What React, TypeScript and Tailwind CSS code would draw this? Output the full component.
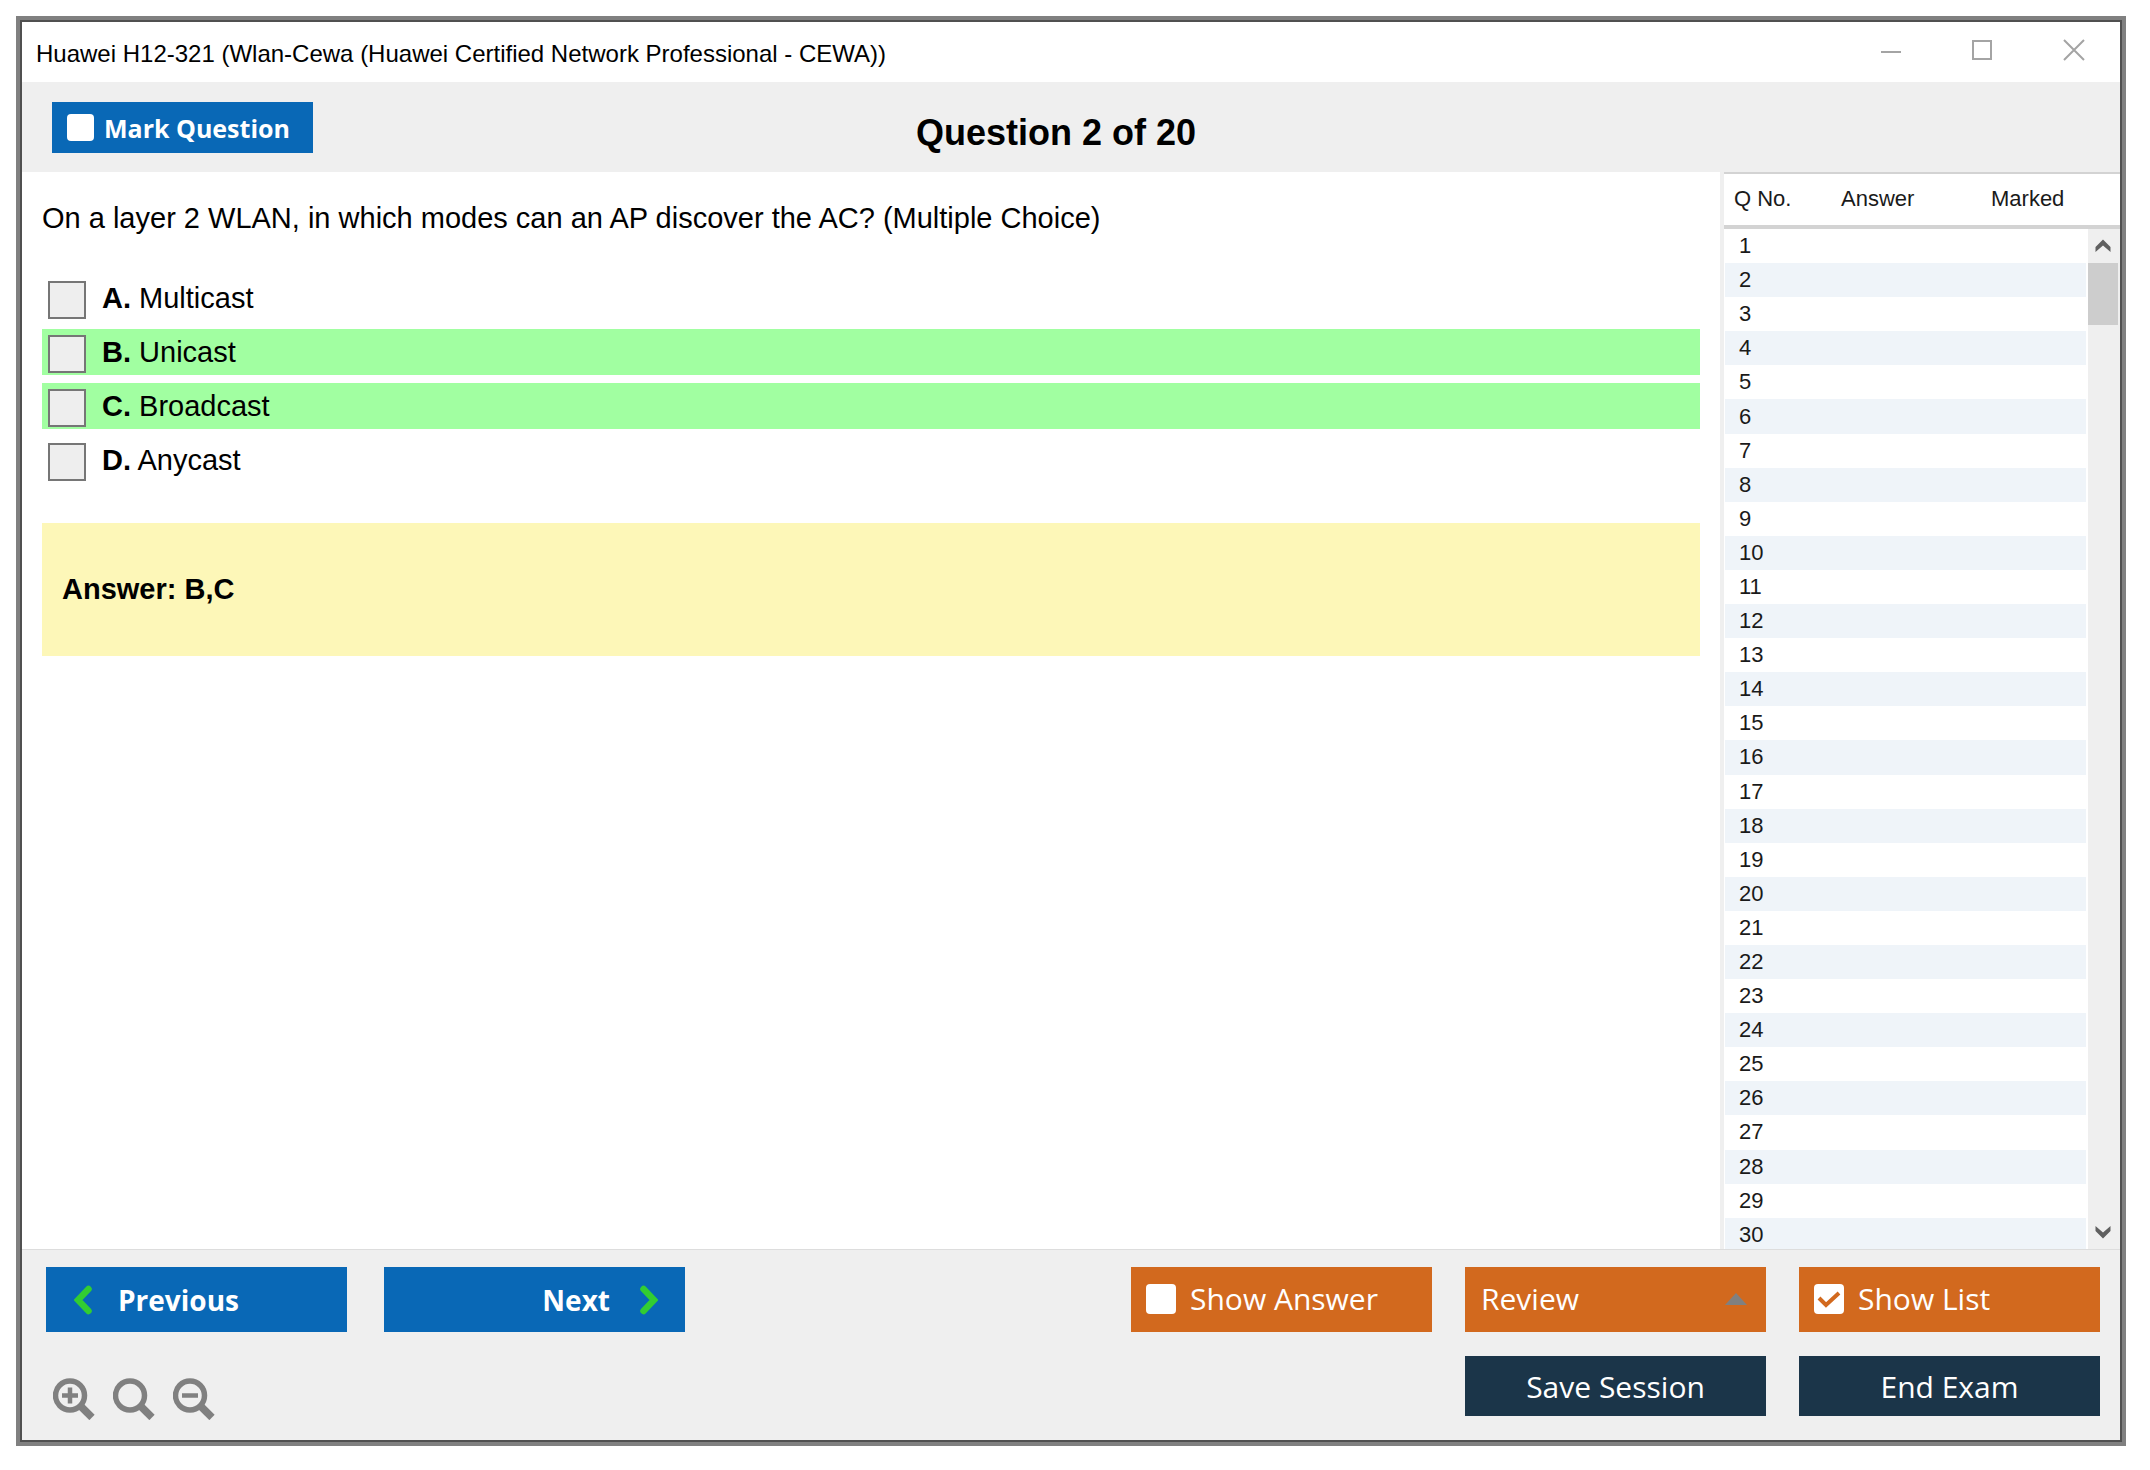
import React from 'react';

const options = [
  { letter: 'A', text: 'Multicast', correct: false },
  { letter: 'B', text: 'Unicast', correct: true },
  { letter: 'C', text: 'Broadcast', correct: true },
  { letter: 'D', text: 'Anycast', correct: false },
];

const questionNumbers = Array.from({ length: 30 }, (_, i) => i + 1);

const TitleBar: React.FC = () => {
  return (
    <header className="flex h-15 items-center justify-between pl-3.5 pr-[35px]">
      <h1 className="pt-1 text-[24px] leading-8">
        Huawei H12-321 (Wlan-Cewa (Huawei Certified Network Professional - CEWA))
      </h1>
      <div className="flex items-center gap-[70px] pb-1 text-[#a4a4a4]">
        <button type="button" aria-label="Minimize">
          <svg viewBox="0 0 22 22" className="size-[22px]" stroke="currentColor" strokeWidth="2" fill="none">
            <path d="M2 13h20" />
          </svg>
        </button>
        <button type="button" aria-label="Maximize">
          <svg viewBox="0 0 22 22" className="size-[22px]" stroke="currentColor" strokeWidth="2" fill="none">
            <path d="M2 2h18v18H2z" />
          </svg>
        </button>
        <button type="button" aria-label="Close">
          <svg viewBox="0 0 22 22" className="size-[22px]" stroke="currentColor" strokeWidth="2" fill="none">
            <path d="M1 1l20 20M21 1L1 21" />
          </svg>
        </button>
      </div>
    </header>
  );
};

const Toolbar: React.FC = () => {
  return (
    <div className="grid h-[90px] grid-cols-[1fr_auto_1fr] items-center bg-[#efefef] px-[30px]">
      <label className="flex h-[51px] w-[261px] items-center gap-2.5 bg-[#0968b6] pl-[15px] text-white">
        <input type="checkbox" className="size-[27px] appearance-none rounded-sm bg-white" />
        <span className="pt-0.5 font-['Open_Sans',sans-serif] text-[25px] leading-8 font-bold">Mark Question</span>
      </label>
      <h2 className="pt-3 pr-[30px] text-4xl font-bold">Question 2 of 20</h2>
    </div>
  );
};

const QuestionPanel: React.FC = () => {
  return (
    <main className="flex-1 px-5 pt-7">
      <p className="text-[29px] leading-9">
        On a layer 2 WLAN, in which modes can an AP discover the AC? (Multiple Choice)
      </p>
      <div className="mt-[39px] flex flex-col gap-2">
        {options.map((option) => (
          <label
            key={option.letter}
            className={`flex h-[46px] gap-4 pl-1.5 text-[29px] leading-[46px] ${option.correct ? 'bg-[#a1ffa1]' : ''}`}
          >
            <input
              type="checkbox"
              className="mt-1.5 size-[38px] appearance-none border-2 border-[#767676] bg-[#eeeeee]"
            />
            <span>
              <b>{option.letter}.</b> {option.text}
            </span>
          </label>
        ))}
      </div>
      <div className="mt-10 flex h-[133px] items-center bg-[#fdf7b8] px-5 text-[29px] font-bold">Answer: B,C</div>
    </main>
  );
};

const QuestionList: React.FC = () => {
  return (
    <aside className="flex w-[400px] flex-col border-l-4 border-[#efefef] text-[22px] text-[#1a1a1a]">
      <div className="flex h-[57px] items-center border-t-2 border-b-4 border-[#d3d3d3] pb-0.5">
        <span className="w-[107px] pl-2.5">Q No.</span>
        <span className="w-[150px] pl-2.5">Answer</span>
        <span className="pl-2.5">Marked</span>
      </div>
      <div className="flex h-[1020px] justify-between overflow-hidden">
        <table className="ml-px h-[1023px] w-[361px] border-collapse">
          <tbody>
            {questionNumbers.map((n) => (
              <tr key={n} className="even:bg-[#eff4f9]">
                <td className="w-[107px] pl-3.5 leading-8">{n}</td>
                <td className="w-[150px]" />
                <td />
              </tr>
            ))}
          </tbody>
        </table>
        <div className="flex h-full w-8 flex-col items-center bg-[#efefef] pr-0.5">
          <button type="button" aria-label="Scroll up" className="flex h-[34px] items-center justify-center">
            <svg viewBox="0 0 16 14" className="h-3.5 w-4" fill="#606060">
              <path d="M8 .5l7.500 7.500v5L8 6.500.5 13V8z" />
            </svg>
          </button>
          <div className="h-[62px] w-[30px] bg-[#cdcdcd]" />
          <button type="button" aria-label="Scroll down" className="mt-auto flex h-[34px] items-center justify-center">
            <svg viewBox="0 0 16 14" className="h-3.5 w-4" fill="#606060">
              <path d="M8 13.500L.5 6V1L8 7.500 15.500 1v5z" />
            </svg>
          </button>
        </div>
      </div>
    </aside>
  );
};

const ZoomIcon: React.FC<{ children?: React.ReactNode }> = ({ children }) => {
  return (
    <svg viewBox="0 0 42 42" className="size-[42px]" fill="none" stroke="#808080">
      <circle cx="17" cy="17.500" r="14.500" strokeWidth="5.500" />
      <path d="M27 27.500l12 12" strokeWidth="7.500" />
      {children}
    </svg>
  );
};

const Footer: React.FC = () => {
  return (
    <footer className="flex h-[191px] justify-between border-t border-[#dddddd] bg-[#efefef] pt-[17px] pr-5 pl-6 font-['Open_Sans',sans-serif] text-[30px] text-white">
      <div>
        <div className="flex gap-[37px] text-[28px] font-bold">
          <button type="button" className="flex h-[65px] w-[301px] items-center gap-[26px] bg-[#0968b6] pl-7">
            <svg viewBox="0 0 18 30" className="h-[30px] w-[18px]" fill="none" stroke="#32cd32" strokeWidth="6.500" strokeLinecap="round">
              <path d="M14.500 4L4 15l10.500 11" />
            </svg>
            Previous
          </button>
          <button type="button" className="flex h-[65px] w-[301px] items-center justify-end gap-[30px] bg-[#0968b6] pr-[27px]">
            Next
            <svg viewBox="0 0 18 30" className="h-[30px] w-[18px]" fill="none" stroke="#32cd32" strokeWidth="6.500" strokeLinecap="round">
              <path d="M3.500 4L14 15 3.500 26" />
            </svg>
          </button>
        </div>
        <div className="mt-[46px] flex gap-[18px] pl-[7px]">
          <button type="button" aria-label="Zoom in">
            <ZoomIcon>
              <path d="M17 9.500v16M9 17.500h16" strokeWidth="4.500" />
            </ZoomIcon>
          </button>
          <button type="button" aria-label="Reset zoom">
            <ZoomIcon />
          </button>
          <button type="button" aria-label="Zoom out">
            <ZoomIcon>
              <path d="M9 17.500h16" strokeWidth="4.500" />
            </ZoomIcon>
          </button>
        </div>
      </div>
      <div className="grid auto-rows-min grid-cols-[301px_301px_301px] gap-x-[33px] gap-y-6">
        <label className="flex h-[65px] items-center gap-3.5 bg-[#d2691e] pb-0.5 pl-[15px]">
          <input type="checkbox" className="size-[30px] appearance-none rounded-sm bg-white" />
          Show Answer
        </label>
        <button type="button" className="flex h-[65px] items-center justify-between bg-[#d2691e] pr-[19px] pb-0.5 pl-4">
          Review
          <svg viewBox="0 0 22 12" className="h-3 w-[22px]" fill="#808080">
            <path d="M11 0l11 12H0z" />
          </svg>
        </button>
        <label className="flex h-[65px] items-center gap-3.5 bg-[#d2691e] pb-0.5 pl-[15px]">
          <span className="grid">
            <input type="checkbox" defaultChecked className="col-start-1 row-start-1 size-[30px] appearance-none rounded-sm bg-white" />
            <svg viewBox="0 0 30 30" className="col-start-1 row-start-1 size-[30px]" fill="none" stroke="#d2691e" strokeWidth="4">
              <path d="M5 14l7 7L25 9" />
            </svg>
          </span>
          Show List
        </label>
        <button type="button" className="col-start-2 h-[60px] bg-[#1b3549]">Save Session</button>
        <button type="button" className="h-[60px] bg-[#1b3549]">End Exam</button>
      </div>
    </footer>
  );
};

const App: React.FC = () => {
  return (
    <div className="bg-white p-4 pr-6 font-['Liberation_Sans',Arial,sans-serif] text-black">
      <div className="border-4 border-[#808080]">
        <div className="border-2 border-[#505050]">
          <TitleBar />
          <Toolbar />
          <div className="flex">
            <QuestionPanel />
            <QuestionList />
          </div>
          <Footer />
        </div>
      </div>
    </div>
  );
};

export default App;
